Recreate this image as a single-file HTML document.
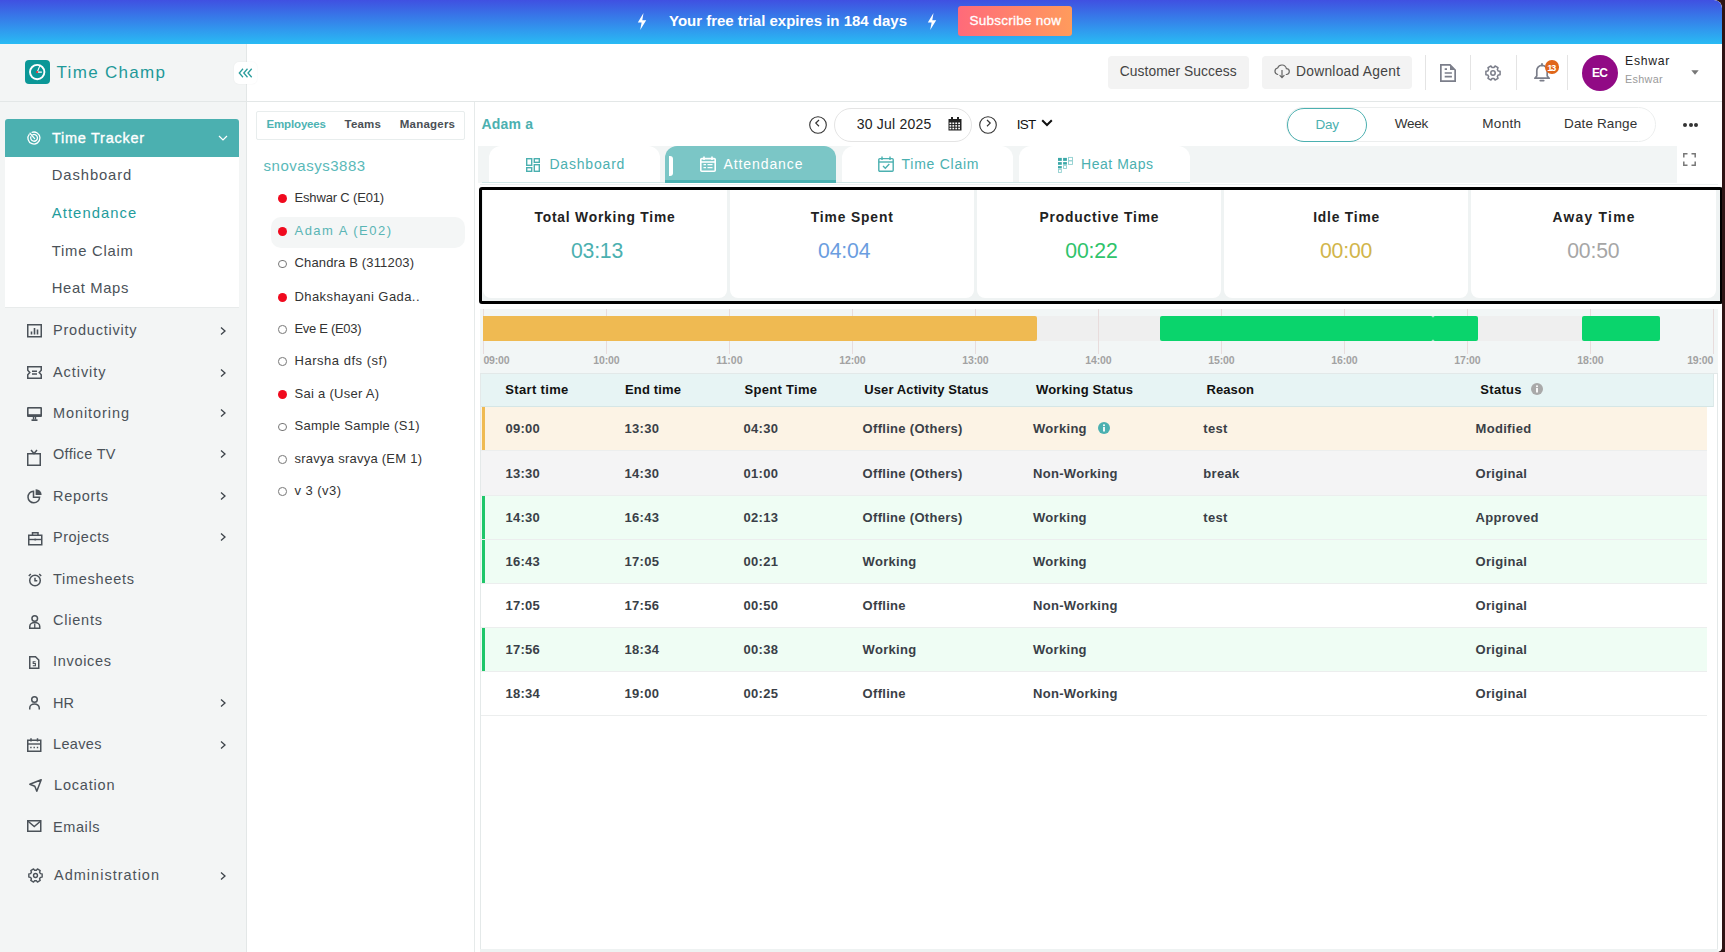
<!DOCTYPE html><html><head><meta charset="utf-8"><style>
html,body{margin:0;padding:0;}
body{width:1725px;height:952px;overflow:hidden;position:relative;background:#2e1415;font-family:"Liberation Sans",sans-serif;}
#pg{position:absolute;left:0;top:0;width:1722px;height:952px;background:#fff;overflow:hidden;border-radius:0 8px 5px 0;}
.t{position:absolute;white-space:nowrap;}
.b{position:absolute;}
svg.b{overflow:visible;}
</style></head><body><div id="pg">
<div class="b" style="left:0px;top:0px;width:1722px;height:44px;background:linear-gradient(180deg,#4050e1 0%,#29bbf4 100%);border-top-right-radius:8px;"></div>
<svg class="b" style="left:637px;top:13px;" width="10" height="17" viewBox="0 0 10 17"><path d="M6.5 0 L0.8 9.6 H4.6 L3.2 17 L9.2 7.2 H5.3 Z" fill="#fff"/></svg>
<svg class="b" style="left:927px;top:13px;" width="10" height="17" viewBox="0 0 10 17"><path d="M6.5 0 L0.8 9.6 H4.6 L3.2 17 L9.2 7.2 H5.3 Z" fill="#fff"/></svg>
<div class="t" style="left:669.00px;top:13.10px;font-size:15px;line-height:15px;color:#fff;font-weight:700;letter-spacing:-0.005px;">Your free trial expires in 184 days</div>
<div class="b" style="left:958px;top:6px;width:114px;height:30px;background:linear-gradient(90deg,#ff6a7a 0%,#ff9b5c 100%);border-radius:3px;"></div>
<div class="t" style="left:969.60px;top:13.87px;font-size:13.5px;line-height:13.5px;color:#fff;letter-spacing:0.229px;-webkit-text-stroke:0.3px #fff;">Subscribe now</div>
<div class="b" style="left:0px;top:44px;width:246px;height:908px;background:#f3f5f5;"></div>
<div class="b" style="left:246px;top:44px;width:1px;height:908px;background:#e3e7e7;"></div>
<div class="b" style="left:247px;top:44px;width:1475px;height:57px;background:#fff;"></div>
<div class="b" style="left:0px;top:101px;width:1722px;height:1px;background:#e3e7e7;"></div>
<div class="b" style="left:25.3px;top:60.2px;width:24.5px;height:23.7px;background:#0b9797;border-radius:4px;"></div>
<svg class="b" style="left:25.3px;top:60.2px;" width="24" height="24" viewBox="0 0 24 24"><circle cx="12.2" cy="12.1" r="7.2" fill="none" stroke="#fff" stroke-width="1.9"/><path d="M12.2 12.1 L14.6 6.4 M12.2 12.1 H16.5" stroke="#fff" stroke-width="1.1" stroke-linecap="round"/><circle cx="12.1" cy="12.1" r="1.1" fill="#f0303a"/></svg>
<div class="t" style="left:56.50px;top:63.91px;font-size:17px;line-height:17px;color:#1e9999;letter-spacing:1.314px;">Time Champ</div>
<div class="b" style="left:234px;top:62px;width:23px;height:22px;background:#fff;border-radius:5px;box-shadow:0 0 2px rgba(0,0,0,0.06);"></div>
<svg class="b" style="left:238px;top:67px;" width="15" height="12" viewBox="0 0 15 12"><path d="M5 1.8 L1.3 6 L5 10.2 M9.5 1.8 L5.8 6 L9.5 10.2 M13.7 1.8 L10 6 L13.7 10.2" fill="none" stroke="#2a9d9d" stroke-width="1.3"/></svg>
<div class="b" style="left:5px;top:119px;width:234px;height:38px;background:#4bb0b0;border-radius:3px 3px 0 0;"></div>
<svg class="b" style="left:27px;top:131px;" width="14" height="14" viewBox="0 0 14 14"><path d="M4.6 1.5 A6 6 0 1 1 2.4 3.1" fill="none" stroke="#fff" stroke-width="1.3"/><path d="M5.4 3.9 A3.4 3.4 0 1 1 4.1 5.2" fill="none" stroke="#fff" stroke-width="1.3"/><path d="M7.6 7.6 L3 2.3" stroke="#fff" stroke-width="1.3" stroke-linecap="round"/></svg>
<div class="t" style="left:52.00px;top:130.93px;font-size:14.5px;line-height:14.5px;color:#fff;letter-spacing:0.722px;-webkit-text-stroke:0.35px #fff;">Time Tracker</div>
<svg class="b" style="left:218px;top:135px;" width="10" height="6" viewBox="0 0 10 6"><path d="M1 1 L5 5 L9 1" fill="none" stroke="#fff" stroke-width="1.2"/></svg>
<div class="b" style="left:5px;top:157px;width:234px;height:150px;background:#fff;"></div>
<div class="b" style="left:5px;top:307px;width:234px;height:1px;background:#e8ebeb;"></div>
<div class="t" style="left:51.80px;top:167.87px;font-size:14.8px;line-height:14.8px;color:#4b5259;letter-spacing:0.887px;">Dashboard</div>
<div class="t" style="left:51.80px;top:205.67px;font-size:14.8px;line-height:14.8px;color:#1f9c9c;letter-spacing:1.069px;">Attendance</div>
<div class="t" style="left:51.80px;top:244.27px;font-size:14.8px;line-height:14.8px;color:#4b5259;letter-spacing:0.747px;">Time Claim</div>
<div class="t" style="left:51.80px;top:280.87px;font-size:14.8px;line-height:14.8px;color:#4b5259;letter-spacing:0.617px;">Heat Maps</div>
<div class="t" style="left:53.00px;top:323.23px;font-size:14.5px;line-height:14.5px;color:#4b5259;letter-spacing:0.787px;">Productivity</div>
<svg class="b" style="left:219px;top:325.5px;" width="8" height="10" viewBox="0 0 8 10"><path d="M2 1.5 L6 5 L2 8.5" fill="none" stroke="#3d434a" stroke-width="1.3"/></svg>
<div class="t" style="left:53.00px;top:365.23px;font-size:14.5px;line-height:14.5px;color:#4b5259;letter-spacing:0.940px;">Activity</div>
<svg class="b" style="left:219px;top:367.5px;" width="8" height="10" viewBox="0 0 8 10"><path d="M2 1.5 L6 5 L2 8.5" fill="none" stroke="#3d434a" stroke-width="1.3"/></svg>
<div class="t" style="left:53.00px;top:406.13px;font-size:14.5px;line-height:14.5px;color:#4b5259;letter-spacing:0.922px;">Monitoring</div>
<svg class="b" style="left:219px;top:408.4px;" width="8" height="10" viewBox="0 0 8 10"><path d="M2 1.5 L6 5 L2 8.5" fill="none" stroke="#3d434a" stroke-width="1.3"/></svg>
<div class="t" style="left:53.00px;top:446.73px;font-size:14.5px;line-height:14.5px;color:#4b5259;letter-spacing:0.324px;">Office TV</div>
<svg class="b" style="left:219px;top:449px;" width="8" height="10" viewBox="0 0 8 10"><path d="M2 1.5 L6 5 L2 8.5" fill="none" stroke="#3d434a" stroke-width="1.3"/></svg>
<div class="t" style="left:53.00px;top:489.13px;font-size:14.5px;line-height:14.5px;color:#4b5259;letter-spacing:0.705px;">Reports</div>
<svg class="b" style="left:219px;top:491.4px;" width="8" height="10" viewBox="0 0 8 10"><path d="M2 1.5 L6 5 L2 8.5" fill="none" stroke="#3d434a" stroke-width="1.3"/></svg>
<div class="t" style="left:53.00px;top:529.93px;font-size:14.5px;line-height:14.5px;color:#4b5259;letter-spacing:0.517px;">Projects</div>
<svg class="b" style="left:219px;top:532.2px;" width="8" height="10" viewBox="0 0 8 10"><path d="M2 1.5 L6 5 L2 8.5" fill="none" stroke="#3d434a" stroke-width="1.3"/></svg>
<div class="t" style="left:53.00px;top:571.53px;font-size:14.5px;line-height:14.5px;color:#4b5259;letter-spacing:0.733px;">Timesheets</div>
<div class="t" style="left:53.00px;top:613.13px;font-size:14.5px;line-height:14.5px;color:#4b5259;letter-spacing:0.780px;">Clients</div>
<div class="t" style="left:53.00px;top:654.23px;font-size:14.5px;line-height:14.5px;color:#4b5259;letter-spacing:0.687px;">Invoices</div>
<div class="t" style="left:53.00px;top:695.73px;font-size:14.5px;line-height:14.5px;color:#4b5259;">HR</div>
<svg class="b" style="left:219px;top:698px;" width="8" height="10" viewBox="0 0 8 10"><path d="M2 1.5 L6 5 L2 8.5" fill="none" stroke="#3d434a" stroke-width="1.3"/></svg>
<div class="t" style="left:53.00px;top:737.23px;font-size:14.5px;line-height:14.5px;color:#4b5259;letter-spacing:0.348px;">Leaves</div>
<svg class="b" style="left:219px;top:739.5px;" width="8" height="10" viewBox="0 0 8 10"><path d="M2 1.5 L6 5 L2 8.5" fill="none" stroke="#3d434a" stroke-width="1.3"/></svg>
<div class="t" style="left:54.00px;top:778.23px;font-size:14.5px;line-height:14.5px;color:#4b5259;letter-spacing:0.811px;">Location</div>
<div class="t" style="left:53.00px;top:820.23px;font-size:14.5px;line-height:14.5px;color:#4b5259;letter-spacing:0.598px;">Emails</div>
<div class="t" style="left:54.00px;top:868.23px;font-size:14.5px;line-height:14.5px;color:#4b5259;letter-spacing:1.010px;">Administration</div>
<svg class="b" style="left:219px;top:870.5px;" width="8" height="10" viewBox="0 0 8 10"><path d="M2 1.5 L6 5 L2 8.5" fill="none" stroke="#3d434a" stroke-width="1.3"/></svg>
<svg class="b" style="left:27px;top:324px;" width="15" height="13.5" viewBox="0 0 15 13.5"><rect x="0.75" y="0.75" width="13.5" height="12" stroke="#4b5259" stroke-width="1.5" fill="none"/><path d="M4.5 7.5 V10.5 M7.5 4 V10.5 M10.5 5.5 V10.5" stroke="#4b5259" stroke-width="1.6"/></svg>
<svg class="b" style="left:27px;top:366px;" width="15" height="13" viewBox="0 0 15 13"><path d="M0.75 0.75 H14.25 V4.2 L12.2 6.5 L14.25 8.8 V12.25 H0.75 V8.8 L2.8 6.5 L0.75 4.2 Z" stroke="#4b5259" stroke-width="1.5" fill="none" stroke-linejoin="miter"/><path d="M5 5.3 H10 M5 8 H10" stroke="#4b5259" stroke-width="1.5"/></svg>
<svg class="b" style="left:27px;top:407px;" width="15" height="14" viewBox="0 0 15 14"><rect x="0" y="0" width="15" height="10" rx="1" fill="#4b5259"/><rect x="1.6" y="1.6" width="11.8" height="5.6" fill="#f3f5f5"/><path d="M6.5 10 V12.5 M8.5 10 V12.5" stroke="#4b5259" stroke-width="1.4"/><rect x="4.5" y="12.3" width="6" height="1.7" fill="#4b5259"/></svg>
<svg class="b" style="left:27px;top:449px;" width="14" height="18" viewBox="0 0 14 18"><rect x="0.75" y="4.75" width="12.5" height="11.5" stroke="#4b5259" stroke-width="1.5" fill="none"/><path d="M4 1 L7 4.5 L10 1" stroke="#4b5259" stroke-width="1.5" fill="none"/></svg>
<svg class="b" style="left:27px;top:489px;" width="15.5" height="14" viewBox="0 0 15.5 14"><path d="M6.5 2.2 A5.8 5.8 0 1 0 12.6 8.2 H6.5 Z" stroke="#4b5259" stroke-width="1.5" fill="none"/><path d="M8.6 0.2 A5.6 5.6 0 0 1 14.6 6.1 H8.6 Z" fill="#4b5259"/></svg>
<svg class="b" style="left:27.5px;top:532px;" width="14.5" height="13.5" viewBox="0 0 14.5 13.5"><rect x="0.75" y="3.25" width="13" height="9.5" stroke="#4b5259" stroke-width="1.5" fill="none"/><path d="M4.5 3.25 V0.75 H10 V3.25" stroke="#4b5259" stroke-width="1.5" fill="none"/><path d="M0.75 7.5 H13.75" stroke="#4b5259" stroke-width="1.4"/><rect x="6.4" y="6.7" width="1.7" height="1.7" fill="#4b5259"/></svg>
<svg class="b" style="left:27.5px;top:573px;" width="14" height="13.5" viewBox="0 0 14 13.5"><circle cx="7" cy="7.5" r="5.3" stroke="#4b5259" stroke-width="1.5" fill="none"/><path d="M7 4.8 V7.8 H9.3" stroke="#4b5259" stroke-width="1.5" fill="none"/><path d="M0.8 3 L2.8 1 M13.2 3 L11.2 1" stroke="#4b5259" stroke-width="1.5"/></svg>
<svg class="b" style="left:28.5px;top:614.5px;" width="11.5" height="14" viewBox="0 0 11.5 14"><circle cx="5.75" cy="3.5" r="2.8" stroke="#4b5259" stroke-width="1.5" fill="none"/><path d="M0.75 13.25 V11.5 A5 4 0 0 1 10.75 11.5 V13.25 Z" stroke="#4b5259" stroke-width="1.5" fill="none"/><path d="M5.75 8.5 V13" stroke="#4b5259" stroke-width="1.3"/></svg>
<svg class="b" style="left:29px;top:655.5px;" width="10.5" height="13" viewBox="0 0 10.5 13"><path d="M0.75 0.75 H6.5 L9.75 4 V12.25 H0.75 Z" stroke="#4b5259" stroke-width="1.5" fill="none"/><path d="M6.6 5.8 H4.2 V7.5 H6.4 V9.7 H3.8" fill="none" stroke="#4b5259" stroke-width="1.1"/></svg>
<svg class="b" style="left:29px;top:696px;" width="11" height="14" viewBox="0 0 11 14"><circle cx="5.5" cy="3.5" r="2.8" stroke="#4b5259" stroke-width="1.5" fill="none"/><path d="M0.75 13.5 V12 A4.75 4 0 0 1 10.25 12 V13.5" stroke="#4b5259" stroke-width="1.5" fill="none"/></svg>
<svg class="b" style="left:27px;top:738px;" width="14.5" height="14" viewBox="0 0 14.5 14"><rect x="0.75" y="2.25" width="13" height="11" stroke="#4b5259" stroke-width="1.5" fill="none"/><path d="M0.75 6 H13.75" stroke="#4b5259" stroke-width="1.4"/><path d="M4 0.3 V3.5 M10.5 0.3 V3.5" stroke="#4b5259" stroke-width="1.5"/><path d="M3.2 9.5 H4.6 M6.5 9.5 H7.9 M9.8 9.5 H11.2" stroke="#4b5259" stroke-width="1.4"/></svg>
<svg class="b" style="left:28.5px;top:779px;" width="13" height="13" viewBox="0 0 13 13"><path d="M12.2 0.8 L0.8 5.2 L5.8 7.2 L7.8 12.2 Z" stroke="#4b5259" stroke-width="1.5" fill="none" stroke-linejoin="round"/></svg>
<svg class="b" style="left:27px;top:820px;" width="14.5" height="12" viewBox="0 0 14.5 12"><rect x="0.75" y="0.75" width="13" height="10.5" stroke="#4b5259" stroke-width="1.5" fill="none"/><path d="M0.75 1 L7.25 6.5 L13.75 1" stroke="#4b5259" stroke-width="1.5" fill="none"/></svg>
<svg class="b" style="left:27.5px;top:868px;" width="15" height="15" viewBox="0 0 16 16"><path d="M6.05 2.75 L6.30 0.90 L9.70 0.90 L9.95 2.75 L11.57 3.69 L13.30 2.98 L15.00 5.93 L13.52 7.06 L13.52 8.94 L15.00 10.07 L13.30 13.02 L11.57 12.31 L9.95 13.25 L9.70 15.10 L6.30 15.10 L6.05 13.25 L4.43 12.31 L2.70 13.02 L1.00 10.07 L2.48 8.94 L2.48 7.06 L1.00 5.93 L2.70 2.98 L4.43 3.69 Z" stroke="#4b5259" stroke-width="1.5" fill="none" stroke-linejoin="round" transform="rotate(30 8 8)"/><circle cx="8" cy="8" r="2.1" stroke="#4b5259" stroke-width="1.5" fill="none"/></svg>
<div class="b" style="left:247px;top:102px;width:227px;height:850px;background:#fff;"></div>
<div class="b" style="left:474px;top:102px;width:1px;height:850px;background:#e6eaea;"></div>
<div class="b" style="left:256px;top:111px;width:209px;height:28.8px;background:#fff;border:1px solid #e8eded;border-radius:2px;box-sizing:border-box;"></div>
<div class="t" style="left:266.50px;top:118.67px;font-size:11.5px;line-height:11.5px;color:#4db3b3;font-weight:700;letter-spacing:-0.153px;">Employees</div>
<div class="t" style="left:344.60px;top:118.67px;font-size:11.5px;line-height:11.5px;color:#4a4f55;font-weight:700;letter-spacing:0.179px;">Teams</div>
<div class="t" style="left:399.80px;top:118.67px;font-size:11.5px;line-height:11.5px;color:#4a4f55;font-weight:700;letter-spacing:0.216px;">Managers</div>
<div class="t" style="left:263.60px;top:158.30px;font-size:15px;line-height:15px;color:#5ab9b9;letter-spacing:0.518px;">snovasys3883</div>
<div class="b" style="left:271px;top:217px;width:194px;height:31px;background:#f4f6f6;border-radius:10px;"></div>
<div class="b" style="left:277.5px;top:194.0px;width:9px;height:9px;background:#f00a1e;border-radius:50%;"></div>
<div class="t" style="left:294.50px;top:191.00px;font-size:13px;line-height:13px;color:#333;letter-spacing:-0.166px;">Eshwar C (E01)</div>
<div class="b" style="left:277.5px;top:227.2px;width:9px;height:9px;background:#f00a1e;border-radius:50%;"></div>
<div class="t" style="left:294.50px;top:224.20px;font-size:13px;line-height:13px;color:#5ab5b5;letter-spacing:1.481px;">Adam A (E02)</div>
<div class="b" style="left:278px;top:259.6px;width:8.6px;height:8.6px;border:1px solid #777;border-radius:50%;box-sizing:border-box;"></div>
<div class="t" style="left:294.50px;top:256.40px;font-size:13px;line-height:13px;color:#333;letter-spacing:0.156px;">Chandra B (311203)</div>
<div class="b" style="left:277.5px;top:292.5px;width:9px;height:9px;background:#f00a1e;border-radius:50%;"></div>
<div class="t" style="left:294.50px;top:289.50px;font-size:13px;line-height:13px;color:#333;letter-spacing:0.424px;">Dhakshayani Gada..</div>
<div class="b" style="left:278px;top:325.2px;width:8.6px;height:8.6px;border:1px solid #777;border-radius:50%;box-sizing:border-box;"></div>
<div class="t" style="left:294.50px;top:322.00px;font-size:13px;line-height:13px;color:#333;letter-spacing:-0.309px;">Eve E (E03)</div>
<div class="b" style="left:278px;top:357.2px;width:8.6px;height:8.6px;border:1px solid #777;border-radius:50%;box-sizing:border-box;"></div>
<div class="t" style="left:294.50px;top:354.00px;font-size:13px;line-height:13px;color:#333;letter-spacing:0.518px;">Harsha dfs (sf)</div>
<div class="b" style="left:277.5px;top:390.0px;width:9px;height:9px;background:#f00a1e;border-radius:50%;"></div>
<div class="t" style="left:294.50px;top:387.00px;font-size:13px;line-height:13px;color:#333;letter-spacing:0.276px;">Sai a (User A)</div>
<div class="b" style="left:278px;top:422.5px;width:8.6px;height:8.6px;border:1px solid #777;border-radius:50%;box-sizing:border-box;"></div>
<div class="t" style="left:294.50px;top:419.30px;font-size:13px;line-height:13px;color:#333;letter-spacing:0.297px;">Sample Sample (S1)</div>
<div class="b" style="left:278px;top:455.2px;width:8.6px;height:8.6px;border:1px solid #777;border-radius:50%;box-sizing:border-box;"></div>
<div class="t" style="left:294.50px;top:452.00px;font-size:13px;line-height:13px;color:#333;letter-spacing:0.247px;">sravya sravya (EM 1)</div>
<div class="b" style="left:278px;top:487.2px;width:8.6px;height:8.6px;border:1px solid #777;border-radius:50%;box-sizing:border-box;"></div>
<div class="t" style="left:294.50px;top:484.00px;font-size:13px;line-height:13px;color:#333;letter-spacing:0.451px;">v 3 (v3)</div>
<div class="b" style="left:475px;top:102px;width:1247px;height:850px;background:#fff;"></div>
<div class="t" style="left:481.60px;top:117.15px;font-size:14px;line-height:14px;color:#4bb0b0;font-weight:700;letter-spacing:0.165px;">Adam a</div>
<svg class="b" style="left:809px;top:116px;" width="18" height="18" viewBox="0 0 18 18"><circle cx="9" cy="9" r="8.3" fill="none" stroke="#333" stroke-width="1.1"/><path d="M10 4 L6.8 7.1 L10 10.2" fill="none" stroke="#333" stroke-width="1.2"/></svg>
<svg class="b" style="left:979px;top:116px;" width="18" height="18" viewBox="0 0 18 18"><circle cx="9" cy="9" r="8.3" fill="none" stroke="#333" stroke-width="1.1"/><path d="M8 4 L11.2 7.1 L8 10.2" fill="none" stroke="#333" stroke-width="1.2"/></svg>
<div class="b" style="left:834px;top:108px;width:138px;height:34px;border:1px solid #e4e4e4;border-radius:17px;box-sizing:border-box;"></div>
<div class="t" style="left:856.70px;top:117.15px;font-size:14px;line-height:14px;color:#222;letter-spacing:0.211px;">30 Jul 2025</div>
<svg class="b" style="left:948px;top:117px;" width="14" height="14" viewBox="0 0 14 14"><rect x="0.5" y="2" width="13" height="11.5" fill="#222"/><rect x="3" y="0" width="2" height="3.5" fill="#222"/><rect x="9" y="0" width="2" height="3.5" fill="#222"/><rect x="1.5" y="5.5" width="1.8" height="1.6" fill="#fff"/><rect x="1.5" y="8.1" width="1.8" height="1.6" fill="#fff"/><rect x="1.5" y="10.7" width="1.8" height="1.6" fill="#fff"/><rect x="4.4" y="5.5" width="1.8" height="1.6" fill="#fff"/><rect x="4.4" y="8.1" width="1.8" height="1.6" fill="#fff"/><rect x="4.4" y="10.7" width="1.8" height="1.6" fill="#fff"/><rect x="7.3" y="5.5" width="1.8" height="1.6" fill="#fff"/><rect x="7.3" y="8.1" width="1.8" height="1.6" fill="#fff"/><rect x="7.3" y="10.7" width="1.8" height="1.6" fill="#fff"/><rect x="10.2" y="5.5" width="1.8" height="1.6" fill="#fff"/><rect x="10.2" y="8.1" width="1.8" height="1.6" fill="#fff"/><rect x="10.2" y="10.7" width="1.8" height="1.6" fill="#fff"/></svg>
<div class="t" style="left:1016.80px;top:117.57px;font-size:13.5px;line-height:13.5px;color:#111;letter-spacing:-0.751px;">IST</div>
<svg class="b" style="left:1041px;top:119px;" width="12" height="8" viewBox="0 0 12 8"><path d="M1.2 1.2 L6 6 L10.8 1.2" fill="none" stroke="#111" stroke-width="2"/></svg>
<div class="b" style="left:1286px;top:107px;width:370px;height:35px;border:1px solid #eceeee;border-radius:18px;box-sizing:border-box;"></div>
<div class="b" style="left:1287px;top:108px;width:80px;height:34px;border:1px solid #4bb0b0;border-radius:17px;box-sizing:border-box;"></div>
<div class="t" style="left:1315.40px;top:117.97px;font-size:13.5px;line-height:13.5px;color:#4bb0b0;letter-spacing:-0.204px;">Day</div>
<div class="t" style="left:1394.80px;top:117.07px;font-size:13.5px;line-height:13.5px;color:#333;letter-spacing:-0.255px;">Week</div>
<div class="t" style="left:1482.30px;top:117.07px;font-size:13.5px;line-height:13.5px;color:#333;letter-spacing:0.320px;">Month</div>
<div class="t" style="left:1564.10px;top:117.07px;font-size:13.5px;line-height:13.5px;color:#333;letter-spacing:0.117px;">Date Range</div>
<div class="b" style="left:1683.0px;top:123px;width:4px;height:4px;background:#333;border-radius:50%;"></div>
<div class="b" style="left:1688.5px;top:123px;width:4px;height:4px;background:#333;border-radius:50%;"></div>
<div class="b" style="left:1694.0px;top:123px;width:4px;height:4px;background:#333;border-radius:50%;"></div>
<div class="b" style="left:478px;top:146px;width:1199px;height:37px;background:#f2f5f5;"></div>
<div class="b" style="left:482px;top:182px;width:708px;height:1px;background:#cfe6e6;"></div>
<div class="b" style="left:480px;top:184px;width:1238px;height:1px;background:#edf1f1;"></div>
<div class="b" style="left:489px;top:146px;width:171px;height:36px;background:#fff;border-radius:12px 12px 0 0;"></div>
<div class="b" style="left:665px;top:146px;width:171px;height:37px;background:#7bc6c6;border-radius:12px 12px 0 0;"></div>
<div class="b" style="left:665px;top:179.5px;width:171px;height:3.5px;background:#4bb0b0;"></div>
<div class="b" style="left:842px;top:146px;width:171px;height:36px;background:#fff;border-radius:12px 12px 0 0;"></div>
<div class="b" style="left:1019px;top:146px;width:171px;height:36px;background:#fff;border-radius:12px 12px 0 0;"></div>
<div class="b" style="left:668.8px;top:156px;width:4.2px;height:19.6px;background:#fff;border-radius:0 3px 3px 0;"></div>
<svg class="b" style="left:526px;top:158px;" width="14" height="14" viewBox="0 0 14 14"><rect x="0.7" y="0.7" width="5" height="6.6" fill="none" stroke="#4bb0b0" stroke-width="1.4"/><rect x="8.3" y="0.7" width="5" height="3.6" fill="none" stroke="#4bb0b0" stroke-width="1.4"/><rect x="0.7" y="9.7" width="5" height="3.6" fill="none" stroke="#4bb0b0" stroke-width="1.4"/><rect x="8.3" y="6.7" width="5" height="6.6" fill="none" stroke="#4bb0b0" stroke-width="1.4"/></svg>
<div class="t" style="left:549.40px;top:156.95px;font-size:14px;line-height:14px;color:#4bb0b0;letter-spacing:0.814px;">Dashboard</div>
<svg class="b" style="left:700px;top:156px;" width="16" height="16" viewBox="0 0 16 16"><rect x="0.8" y="2.6" width="14.4" height="12.6" rx="1" fill="none" stroke="#fff" stroke-width="1.6"/><path d="M0.8 6 H15.2" stroke="#fff" stroke-width="1.6"/><path d="M4 0.5 V4 M12 0.5 V4" stroke="#fff" stroke-width="1.6"/><path d="M3.5 8.7 H6 M7.5 8.7 H12.5 M3.5 11.7 H6 M7.5 11.7 H12.5" stroke="#fff" stroke-width="1.3"/></svg>
<div class="t" style="left:723.50px;top:156.95px;font-size:14px;line-height:14px;color:#fff;letter-spacing:0.907px;">Attendance</div>
<svg class="b" style="left:878px;top:156px;" width="16" height="16" viewBox="0 0 16 16"><rect x="0.8" y="2.6" width="14.4" height="12.6" rx="1" fill="none" stroke="#4bb0b0" stroke-width="1.4"/><path d="M0.8 6 H15.2" stroke="#4bb0b0" stroke-width="1.4"/><path d="M4 0.5 V4 M12 0.5 V4" stroke="#4bb0b0" stroke-width="1.4"/><path d="M5 10 L7.3 12.2 L11.3 8" fill="none" stroke="#4bb0b0" stroke-width="1.4"/></svg>
<div class="t" style="left:901.50px;top:156.95px;font-size:14px;line-height:14px;color:#4bb0b0;letter-spacing:0.749px;">Time Claim</div>
<svg class="b" style="left:1057px;top:156px;" width="17" height="18" viewBox="0 0 17 18"><g fill="#3aa8a8"><rect x="1" y="1.9" width="3.8" height="3"/><rect x="6.1" y="1.9" width="3.8" height="3"/><rect x="1" y="6.1" width="3.8" height="2.7"/><rect x="6.1" y="6.1" width="3.8" height="2.5"/><rect x="1" y="10.1" width="3.8" height="2.3"/></g><g fill="none" stroke="#8fcfcf" stroke-width="0.9"><rect x="1.45" y="13.4" width="2.9" height="3"/><rect x="6.55" y="9.6" width="2.9" height="2.9"/><rect x="11.5" y="1.4" width="4" height="3.4"/><rect x="11.5" y="4.8" width="4" height="3.6"/></g></svg>
<div class="t" style="left:1081.00px;top:156.95px;font-size:14px;line-height:14px;color:#4bb0b0;letter-spacing:0.538px;">Heat Maps</div>
<svg class="b" style="left:1683px;top:153px;" width="13" height="13" viewBox="0 0 13 13"><path d="M0.8 4.5 V0.8 H4.5 M8.5 0.8 H12.2 V4.5 M12.2 8.5 V12.2 H8.5 M4.5 12.2 H0.8 V8.5" fill="none" stroke="#777" stroke-width="1.5"/></svg>
<div class="b" style="left:479px;top:187px;width:1244px;height:117px;border:3px solid #000;box-sizing:border-box;background:#eff3f3;border-radius:3px;"></div>
<div class="b" style="left:482.6px;top:190px;width:244.2px;height:108.3px;background:#fff;border-radius:0 0 8px 8px;"></div>
<div class="t" style="left:534.45px;top:211.02px;font-size:13.8px;line-height:13.8px;color:#222;font-weight:700;letter-spacing:0.811px;">Total Working Time</div>
<div class="t" style="left:570.90px;top:239.75px;font-size:21.2px;line-height:21.2px;color:#4bb0b0;letter-spacing:-0.163px;">03:13</div>
<div class="b" style="left:729.8px;top:190px;width:244.2px;height:108.3px;background:#fff;border-radius:0 0 8px 8px;"></div>
<div class="t" style="left:810.80px;top:211.02px;font-size:13.8px;line-height:13.8px;color:#222;font-weight:700;letter-spacing:0.874px;">Time Spent</div>
<div class="t" style="left:818.10px;top:239.75px;font-size:21.2px;line-height:21.2px;color:#6a9de0;letter-spacing:-0.163px;">04:04</div>
<div class="b" style="left:977.0px;top:190px;width:244.2px;height:108.3px;background:#fff;border-radius:0 0 8px 8px;"></div>
<div class="t" style="left:1039.50px;top:211.02px;font-size:13.8px;line-height:13.8px;color:#222;font-weight:700;letter-spacing:0.849px;">Productive Time</div>
<div class="t" style="left:1065.30px;top:239.75px;font-size:21.2px;line-height:21.2px;color:#2fc36b;letter-spacing:-0.163px;">00:22</div>
<div class="b" style="left:1224.2px;top:190px;width:244.2px;height:108.3px;background:#fff;border-radius:0 0 8px 8px;"></div>
<div class="t" style="left:1313.20px;top:211.02px;font-size:13.8px;line-height:13.8px;color:#222;font-weight:700;letter-spacing:0.804px;">Idle Time</div>
<div class="t" style="left:1320.00px;top:239.75px;font-size:21.2px;line-height:21.2px;color:#d1b54a;letter-spacing:-0.163px;">00:00</div>
<div class="b" style="left:1471.4px;top:190px;width:244.2px;height:108.3px;background:#fff;border-radius:0 0 8px 8px;"></div>
<div class="t" style="left:1552.40px;top:211.02px;font-size:13.8px;line-height:13.8px;color:#222;font-weight:700;letter-spacing:1.301px;">Away Time</div>
<div class="t" style="left:1567.20px;top:239.75px;font-size:21.2px;line-height:21.2px;color:#a6a6a6;letter-spacing:-0.163px;">00:50</div>
<div class="b" style="left:480px;top:309px;width:1238px;height:65px;background:#f2f6f6;"></div>
<div class="b" style="left:480px;top:373px;width:1238px;height:1px;background:#e2e8e8;"></div>
<div class="b" style="left:483.4px;top:316px;width:1176.7px;height:25px;background:#efefef;"></div>
<div class="b" style="left:482.9px;top:309px;width:1px;height:45px;background:#e8dcdc;"></div>
<div class="b" style="left:605.9px;top:309px;width:1px;height:45px;background:#e8dcdc;"></div>
<div class="b" style="left:728.9px;top:309px;width:1px;height:45px;background:#e8dcdc;"></div>
<div class="b" style="left:851.9px;top:309px;width:1px;height:45px;background:#e8dcdc;"></div>
<div class="b" style="left:974.9px;top:309px;width:1px;height:45px;background:#e8dcdc;"></div>
<div class="b" style="left:1097.9px;top:309px;width:1px;height:45px;background:#e8dcdc;"></div>
<div class="b" style="left:1220.9px;top:309px;width:1px;height:45px;background:#e8dcdc;"></div>
<div class="b" style="left:1343.9px;top:309px;width:1px;height:45px;background:#e8dcdc;"></div>
<div class="b" style="left:1466.9px;top:309px;width:1px;height:45px;background:#e8dcdc;"></div>
<div class="b" style="left:1589.9px;top:309px;width:1px;height:45px;background:#e8dcdc;"></div>
<div class="b" style="left:1712.9px;top:309px;width:1px;height:45px;background:#e8dcdc;"></div>
<div class="b" style="left:483.1px;top:316px;width:553.8px;height:25px;background:#efba52;border-radius:0 2px 2px 0;"></div>
<div class="b" style="left:1159.9px;top:316px;width:272.65px;height:25px;background:#0ad46c;border-radius:2px;"></div>
<div class="b" style="left:1432.55px;top:316px;width:45.1px;height:25px;background:#0ad46c;border-radius:2px;"></div>
<div class="b" style="left:1582.2px;top:316px;width:77.9px;height:25px;background:#0ad46c;border-radius:2px;"></div>
<div class="t" style="left:483.40px;top:354.91px;font-size:10.5px;line-height:10.5px;color:#a2a2a2;font-weight:700;letter-spacing:-0.164px;">09:00</div>
<div class="t" style="left:593.30px;top:354.91px;font-size:10.5px;line-height:10.5px;color:#a2a2a2;font-weight:700;letter-spacing:-0.164px;">10:00</div>
<div class="t" style="left:716.30px;top:354.91px;font-size:10.5px;line-height:10.5px;color:#a2a2a2;font-weight:700;letter-spacing:-0.019px;">11:00</div>
<div class="t" style="left:839.30px;top:354.91px;font-size:10.5px;line-height:10.5px;color:#a2a2a2;font-weight:700;letter-spacing:-0.164px;">12:00</div>
<div class="t" style="left:962.30px;top:354.91px;font-size:10.5px;line-height:10.5px;color:#a2a2a2;font-weight:700;letter-spacing:-0.164px;">13:00</div>
<div class="t" style="left:1085.30px;top:354.91px;font-size:10.5px;line-height:10.5px;color:#a2a2a2;font-weight:700;letter-spacing:-0.164px;">14:00</div>
<div class="t" style="left:1208.30px;top:354.91px;font-size:10.5px;line-height:10.5px;color:#a2a2a2;font-weight:700;letter-spacing:-0.164px;">15:00</div>
<div class="t" style="left:1331.30px;top:354.91px;font-size:10.5px;line-height:10.5px;color:#a2a2a2;font-weight:700;letter-spacing:-0.164px;">16:00</div>
<div class="t" style="left:1454.30px;top:354.91px;font-size:10.5px;line-height:10.5px;color:#a2a2a2;font-weight:700;letter-spacing:-0.164px;">17:00</div>
<div class="t" style="left:1577.30px;top:354.91px;font-size:10.5px;line-height:10.5px;color:#a2a2a2;font-weight:700;letter-spacing:-0.164px;">18:00</div>
<div class="t" style="left:1687.20px;top:354.91px;font-size:10.5px;line-height:10.5px;color:#a2a2a2;font-weight:700;letter-spacing:-0.164px;">19:00</div>
<div class="b" style="left:480px;top:374px;width:1238px;height:576px;border-left:1px solid #e4e9e9;border-right:1px solid #e4e9e9;border-bottom:1px solid #e4e9e9;box-sizing:border-box;"></div>
<div class="b" style="left:481px;top:374px;width:1232px;height:33px;background:#e7f4f4;border-bottom:1px solid #d5e6e6;box-sizing:border-box;"></div>
<div class="b" style="left:1713px;top:374px;width:1px;height:33px;background:#dde9e9;"></div>
<div class="t" style="left:505.30px;top:383.20px;font-size:13px;line-height:13px;color:#111;font-weight:700;letter-spacing:0.338px;">Start time</div>
<div class="t" style="left:625.00px;top:383.20px;font-size:13px;line-height:13px;color:#111;font-weight:700;letter-spacing:0.158px;">End time</div>
<div class="t" style="left:744.50px;top:383.20px;font-size:13px;line-height:13px;color:#111;font-weight:700;letter-spacing:0.296px;">Spent Time</div>
<div class="t" style="left:864.30px;top:383.20px;font-size:13px;line-height:13px;color:#111;font-weight:700;letter-spacing:0.098px;">User Activity Status</div>
<div class="t" style="left:1036.00px;top:383.20px;font-size:13px;line-height:13px;color:#111;font-weight:700;letter-spacing:0.146px;">Working Status</div>
<div class="t" style="left:1206.40px;top:383.20px;font-size:13px;line-height:13px;color:#111;font-weight:700;letter-spacing:0.128px;">Reason</div>
<div class="t" style="left:1480.30px;top:383.20px;font-size:13px;line-height:13px;color:#111;font-weight:700;letter-spacing:0.294px;">Status</div>
<svg class="b" style="left:1531px;top:383px;" width="12" height="12" viewBox="0 0 12 12"><circle cx="6" cy="6" r="6" fill="#a9a9a9"/><rect x="5.1" y="5" width="1.8" height="4.5" fill="#fff"/><circle cx="6" cy="3.2" r="1" fill="#fff"/></svg>
<div class="b" style="left:481px;top:407px;width:1226px;height:44.4px;background:#fcf3e5;border-bottom:1px solid #eceeee;box-sizing:border-box;"></div>
<div class="b" style="left:482px;top:407px;width:3px;height:43.4px;background:#efba52;"></div>
<div class="t" style="left:505.40px;top:422.10px;font-size:13px;line-height:13px;color:#3a3f47;font-weight:700;letter-spacing:0.3px;">09:00</div>
<div class="t" style="left:624.50px;top:422.10px;font-size:13px;line-height:13px;color:#3a3f47;font-weight:700;letter-spacing:0.3px;">13:30</div>
<div class="t" style="left:743.50px;top:422.10px;font-size:13px;line-height:13px;color:#3a3f47;font-weight:700;letter-spacing:0.3px;">04:30</div>
<div class="t" style="left:862.60px;top:422.10px;font-size:13px;line-height:13px;color:#3a3f47;font-weight:700;letter-spacing:0.3px;">Offline (Others)</div>
<div class="t" style="left:1033.00px;top:422.10px;font-size:13px;line-height:13px;color:#3a3f47;font-weight:700;letter-spacing:0.3px;">Working</div>
<div class="t" style="left:1203.30px;top:422.10px;font-size:13px;line-height:13px;color:#3a3f47;font-weight:700;letter-spacing:0.3px;">test</div>
<div class="t" style="left:1475.60px;top:422.10px;font-size:13px;line-height:13px;color:#3a3f47;font-weight:700;letter-spacing:0.3px;">Modified</div>
<svg class="b" style="left:1098px;top:422.4px;" width="12" height="12" viewBox="0 0 12 12"><circle cx="6" cy="6" r="6" fill="#4bb0b0"/><rect x="5.1" y="5" width="1.8" height="4.5" fill="#fff"/><circle cx="6" cy="3.2" r="1" fill="#fff"/></svg>
<div class="b" style="left:481px;top:451.4px;width:1226px;height:44.7px;background:#f4f4f5;border-bottom:1px solid #eceeee;box-sizing:border-box;"></div>
<div class="t" style="left:505.40px;top:466.50px;font-size:13px;line-height:13px;color:#3a3f47;font-weight:700;letter-spacing:0.3px;">13:30</div>
<div class="t" style="left:624.50px;top:466.50px;font-size:13px;line-height:13px;color:#3a3f47;font-weight:700;letter-spacing:0.3px;">14:30</div>
<div class="t" style="left:743.50px;top:466.50px;font-size:13px;line-height:13px;color:#3a3f47;font-weight:700;letter-spacing:0.3px;">01:00</div>
<div class="t" style="left:862.60px;top:466.50px;font-size:13px;line-height:13px;color:#3a3f47;font-weight:700;letter-spacing:0.3px;">Offline (Others)</div>
<div class="t" style="left:1033.00px;top:466.50px;font-size:13px;line-height:13px;color:#3a3f47;font-weight:700;letter-spacing:0.3px;">Non-Working</div>
<div class="t" style="left:1203.30px;top:466.50px;font-size:13px;line-height:13px;color:#3a3f47;font-weight:700;letter-spacing:0.3px;">break</div>
<div class="t" style="left:1475.60px;top:466.50px;font-size:13px;line-height:13px;color:#3a3f47;font-weight:700;letter-spacing:0.3px;">Original</div>
<div class="b" style="left:481px;top:496.1px;width:1226px;height:44.1px;background:#effdf4;border-bottom:1px solid #eceeee;box-sizing:border-box;"></div>
<div class="b" style="left:482px;top:496.1px;width:3px;height:43.1px;background:#1fc66a;"></div>
<div class="t" style="left:505.40px;top:511.20px;font-size:13px;line-height:13px;color:#3a3f47;font-weight:700;letter-spacing:0.3px;">14:30</div>
<div class="t" style="left:624.50px;top:511.20px;font-size:13px;line-height:13px;color:#3a3f47;font-weight:700;letter-spacing:0.3px;">16:43</div>
<div class="t" style="left:743.50px;top:511.20px;font-size:13px;line-height:13px;color:#3a3f47;font-weight:700;letter-spacing:0.3px;">02:13</div>
<div class="t" style="left:862.60px;top:511.20px;font-size:13px;line-height:13px;color:#3a3f47;font-weight:700;letter-spacing:0.3px;">Offline (Others)</div>
<div class="t" style="left:1033.00px;top:511.20px;font-size:13px;line-height:13px;color:#3a3f47;font-weight:700;letter-spacing:0.3px;">Working</div>
<div class="t" style="left:1203.30px;top:511.20px;font-size:13px;line-height:13px;color:#3a3f47;font-weight:700;letter-spacing:0.3px;">test</div>
<div class="t" style="left:1475.60px;top:511.20px;font-size:13px;line-height:13px;color:#3a3f47;font-weight:700;letter-spacing:0.3px;">Approved</div>
<div class="b" style="left:481px;top:540.2px;width:1226px;height:43.6px;background:#effdf4;border-bottom:1px solid #eceeee;box-sizing:border-box;"></div>
<div class="b" style="left:482px;top:540.2px;width:3px;height:42.6px;background:#1fc66a;"></div>
<div class="t" style="left:505.40px;top:555.30px;font-size:13px;line-height:13px;color:#3a3f47;font-weight:700;letter-spacing:0.3px;">16:43</div>
<div class="t" style="left:624.50px;top:555.30px;font-size:13px;line-height:13px;color:#3a3f47;font-weight:700;letter-spacing:0.3px;">17:05</div>
<div class="t" style="left:743.50px;top:555.30px;font-size:13px;line-height:13px;color:#3a3f47;font-weight:700;letter-spacing:0.3px;">00:21</div>
<div class="t" style="left:862.60px;top:555.30px;font-size:13px;line-height:13px;color:#3a3f47;font-weight:700;letter-spacing:0.3px;">Working</div>
<div class="t" style="left:1033.00px;top:555.30px;font-size:13px;line-height:13px;color:#3a3f47;font-weight:700;letter-spacing:0.3px;">Working</div>
<div class="t" style="left:1475.60px;top:555.30px;font-size:13px;line-height:13px;color:#3a3f47;font-weight:700;letter-spacing:0.3px;">Original</div>
<div class="b" style="left:481px;top:583.8px;width:1226px;height:44.1px;background:#fff;border-bottom:1px solid #eceeee;box-sizing:border-box;"></div>
<div class="t" style="left:505.40px;top:598.90px;font-size:13px;line-height:13px;color:#3a3f47;font-weight:700;letter-spacing:0.3px;">17:05</div>
<div class="t" style="left:624.50px;top:598.90px;font-size:13px;line-height:13px;color:#3a3f47;font-weight:700;letter-spacing:0.3px;">17:56</div>
<div class="t" style="left:743.50px;top:598.90px;font-size:13px;line-height:13px;color:#3a3f47;font-weight:700;letter-spacing:0.3px;">00:50</div>
<div class="t" style="left:862.60px;top:598.90px;font-size:13px;line-height:13px;color:#3a3f47;font-weight:700;letter-spacing:0.3px;">Offline</div>
<div class="t" style="left:1033.00px;top:598.90px;font-size:13px;line-height:13px;color:#3a3f47;font-weight:700;letter-spacing:0.3px;">Non-Working</div>
<div class="t" style="left:1475.60px;top:598.90px;font-size:13px;line-height:13px;color:#3a3f47;font-weight:700;letter-spacing:0.3px;">Original</div>
<div class="b" style="left:481px;top:627.9px;width:1226px;height:44.1px;background:#effdf4;border-bottom:1px solid #eceeee;box-sizing:border-box;"></div>
<div class="b" style="left:482px;top:627.9px;width:3px;height:43.1px;background:#1fc66a;"></div>
<div class="t" style="left:505.40px;top:643.00px;font-size:13px;line-height:13px;color:#3a3f47;font-weight:700;letter-spacing:0.3px;">17:56</div>
<div class="t" style="left:624.50px;top:643.00px;font-size:13px;line-height:13px;color:#3a3f47;font-weight:700;letter-spacing:0.3px;">18:34</div>
<div class="t" style="left:743.50px;top:643.00px;font-size:13px;line-height:13px;color:#3a3f47;font-weight:700;letter-spacing:0.3px;">00:38</div>
<div class="t" style="left:862.60px;top:643.00px;font-size:13px;line-height:13px;color:#3a3f47;font-weight:700;letter-spacing:0.3px;">Working</div>
<div class="t" style="left:1033.00px;top:643.00px;font-size:13px;line-height:13px;color:#3a3f47;font-weight:700;letter-spacing:0.3px;">Working</div>
<div class="t" style="left:1475.60px;top:643.00px;font-size:13px;line-height:13px;color:#3a3f47;font-weight:700;letter-spacing:0.3px;">Original</div>
<div class="b" style="left:481px;top:672px;width:1226px;height:44.2px;background:#fff;border-bottom:1px solid #eceeee;box-sizing:border-box;"></div>
<div class="t" style="left:505.40px;top:687.10px;font-size:13px;line-height:13px;color:#3a3f47;font-weight:700;letter-spacing:0.3px;">18:34</div>
<div class="t" style="left:624.50px;top:687.10px;font-size:13px;line-height:13px;color:#3a3f47;font-weight:700;letter-spacing:0.3px;">19:00</div>
<div class="t" style="left:743.50px;top:687.10px;font-size:13px;line-height:13px;color:#3a3f47;font-weight:700;letter-spacing:0.3px;">00:25</div>
<div class="t" style="left:862.60px;top:687.10px;font-size:13px;line-height:13px;color:#3a3f47;font-weight:700;letter-spacing:0.3px;">Offline</div>
<div class="t" style="left:1033.00px;top:687.10px;font-size:13px;line-height:13px;color:#3a3f47;font-weight:700;letter-spacing:0.3px;">Non-Working</div>
<div class="t" style="left:1475.60px;top:687.10px;font-size:13px;line-height:13px;color:#3a3f47;font-weight:700;letter-spacing:0.3px;">Original</div>
<div class="b" style="left:1108px;top:56px;width:141px;height:33px;background:#f3f3f3;border-radius:4px;"></div>
<div class="t" style="left:1119.70px;top:64.92px;font-size:13.8px;line-height:13.8px;color:#444;letter-spacing:0.080px;">Customer Success</div>
<div class="b" style="left:1262px;top:56px;width:150px;height:33px;background:#f3f3f3;border-radius:4px;"></div>
<svg class="b" style="left:1274px;top:63px;" width="16" height="16" viewBox="0 0 16 16"><path d="M4.2 11.5 H3.8 A3.3 3.3 0 0 1 3.6 5 A4.6 4.6 0 0 1 12.4 5.6 A2.9 2.9 0 0 1 12.3 11.5 H11.8" fill="none" stroke="#666" stroke-width="1.2"/><path d="M8 7 V14.5 M5.6 12.2 L8 14.6 L10.4 12.2" fill="none" stroke="#666" stroke-width="1.2"/></svg>
<div class="t" style="left:1296.00px;top:64.92px;font-size:13.8px;line-height:13.8px;color:#444;letter-spacing:0.268px;">Download Agent</div>
<div class="b" style="left:1425px;top:55px;width:1px;height:35px;background:#e4e4e4;"></div>
<div class="b" style="left:1470px;top:55px;width:1px;height:35px;background:#e4e4e4;"></div>
<div class="b" style="left:1516px;top:55px;width:1px;height:35px;background:#e4e4e4;"></div>
<div class="b" style="left:1567px;top:55px;width:1px;height:35px;background:#e4e4e4;"></div>
<svg class="b" style="left:1440px;top:64px;" width="16" height="18" viewBox="0 0 16 18"><path d="M0.85 0.85 H10 L15.15 6 V17.15 H0.85 Z" fill="none" stroke="#7b7e8a" stroke-width="1.7"/><path d="M10 0.85 L15.15 6 H10 Z" fill="#7b7e8a"/><path d="M4.7 5.2 H7 M4.7 9 H11.9 M4.7 12.7 H11.9" stroke="#7b7e8a" stroke-width="1.7"/></svg>
<svg class="b" style="left:1485px;top:65px;" width="16" height="16" viewBox="0 0 16 16"><path d="M6.05 2.75 L6.30 0.90 L9.70 0.90 L9.95 2.75 L11.57 3.69 L13.30 2.98 L15.00 5.93 L13.52 7.06 L13.52 8.94 L15.00 10.07 L13.30 13.02 L11.57 12.31 L9.95 13.25 L9.70 15.10 L6.30 15.10 L6.05 13.25 L4.43 12.31 L2.70 13.02 L1.00 10.07 L2.48 8.94 L2.48 7.06 L1.00 5.93 L2.70 2.98 L4.43 3.69 Z" fill="none" stroke="#7b7e8a" stroke-width="1.5" stroke-linejoin="round" transform="rotate(30 8 8)"/><circle cx="8" cy="8" r="2.2" fill="none" stroke="#7b7e8a" stroke-width="1.5"/></svg>
<svg class="b" style="left:1534px;top:63px;" width="16" height="19" viewBox="0 0 16 19"><path d="M0.8 15.2 H15.2 L13.2 13 V7.5 A5.2 5.2 0 0 0 2.8 7.5 V13 Z" fill="none" stroke="#7b7e8a" stroke-width="1.7" stroke-linejoin="round"/><path d="M8 0.8 V2.5" stroke="#7b7e8a" stroke-width="1.8" stroke-linecap="round"/><path d="M6.3 17.6 H9.7" stroke="#7b7e8a" stroke-width="1.8" stroke-linecap="round"/></svg>
<div class="b" style="left:1545px;top:60px;width:13.6px;height:13.6px;background:#e0661a;border-radius:50%;"></div>
<div class="t" style="left:1547.30px;top:62.86px;font-size:9.5px;line-height:9.5px;color:#fff;font-weight:700;letter-spacing:-1.567px;">13</div>
<div class="b" style="left:1582px;top:55px;width:36px;height:36px;background:#910a85;border-radius:50%;"></div>
<div class="t" style="left:1592.00px;top:66.54px;font-size:12px;line-height:12px;color:#fff;font-weight:700;letter-spacing:-0.671px;">EC</div>
<div class="t" style="left:1625.10px;top:55.37px;font-size:12.2px;line-height:12.2px;color:#222;letter-spacing:0.704px;">Eshwar</div>
<div class="t" style="left:1625.10px;top:73.86px;font-size:10.8px;line-height:10.8px;color:#9a9a9a;letter-spacing:0.297px;">Eshwar</div>
<svg class="b" style="left:1691px;top:70px;" width="8" height="5" viewBox="0 0 8 5"><path d="M0.3 0.3 H7.7 L4 4.8 Z" fill="#777"/></svg>
<div class="b" style="left:480px;top:949px;width:1238px;height:3px;background:#eef2f2;"></div>
</div></body></html>
